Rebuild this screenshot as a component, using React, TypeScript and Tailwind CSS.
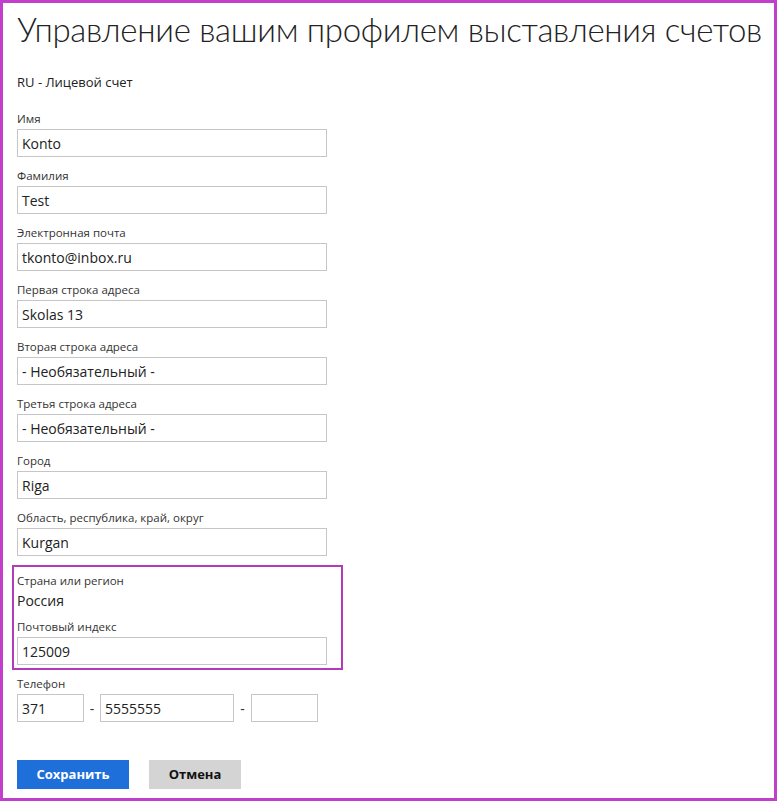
import React from "react";

const fields: { label: string; value: string }[] = [
  { label: "Имя", value: "Konto" },
  { label: "Фамилия", value: "Test" },
  { label: "Электронная почта", value: "tkonto@inbox.ru" },
  { label: "Первая строка адреса", value: "Skolas 13" },
  { label: "Вторая строка адреса", value: "- Необязательный -" },
  { label: "Третья строка адреса", value: "- Необязательный -" },
  { label: "Город", value: "Riga" },
  { label: "Область, республика, край, округ", value: "Kurgan" },
];

const Label = ({ children }: { children: React.ReactNode }) => (
  <div className="text-[11.5px] leading-[17px] h-[17px] text-[#333] whitespace-nowrap">{children}</div>
);

const Box = ({ value, className }: { value: string; className: string }) => (
  <div
    className={`h-[28px] border border-[#c6c6c6] bg-white px-[4px] flex items-center text-[14px] text-[#222] ${className}`}
  >
    {value}
  </div>
);

export default function App() {
  return (
    <div
      className="w-[777px] h-[801px] border-[3px] border-[#c23fcc] bg-white overflow-hidden box-border"
      style={{ fontFamily: '"Open Sans", "Noto Sans", sans-serif' }}
    >
      <div className="pl-[14px] pt-[4px]">
        <h1
          className="text-[33px] font-light leading-[44px] tracking-[-0.3px] text-[#222] whitespace-nowrap"
          style={{ fontFamily: 'Lato, "Open Sans", sans-serif' }}
        >
          Управление вашим профилем выставления счетов
        </h1>
        <div className="mt-[22px] text-[13px] leading-[18px] text-[#222]">RU - Лицевой счет</div>

        <div className="mt-[19px] flex flex-col gap-[10px]">
          {fields.map((f) => (
            <div key={f.label}>
              <Label>{f.label}</Label>
              <Box value={f.value} className="w-[310px] mt-[2px]" />
            </div>
          ))}
        </div>

        <div className="mt-[9px] ml-[-5px] w-[331px] border-2 border-[#b33ab8] pl-[3px] pt-[5px] pb-[3px]">
          <Label>Страна или регион</Label>
          <div className="text-[14px] leading-[20px] text-[#222] mt-[2px]">Россия</div>
          <div className="mt-[7px]">
            <Label>Почтовый индекс</Label>
          </div>
          <Box value="125009" className="w-[310px] mt-[2px]" />
        </div>

        <div className="mt-[5px]">
          <Label>Телефон</Label>
          <div className="flex items-center mt-[2px]">
            <Box value="371" className="w-[67px]" />
            <span className="w-[16px] text-center text-[14px] text-[#333]">-</span>
            <Box value="5555555" className="w-[134px]" />
            <span className="w-[17px] text-center text-[14px] text-[#333]">-</span>
            <Box value="" className="w-[67px]" />
          </div>
        </div>

        <div className="mt-[38px] flex gap-[20px]">
          <button className="w-[112px] h-[29px] bg-[#1f6fdb] text-white text-[13px] font-bold">
            Сохранить
          </button>
          <button className="w-[92px] h-[29px] bg-[#d4d4d4] text-[#111] text-[13px] font-bold">
            Отмена
          </button>
        </div>
      </div>
    </div>
  );
}
